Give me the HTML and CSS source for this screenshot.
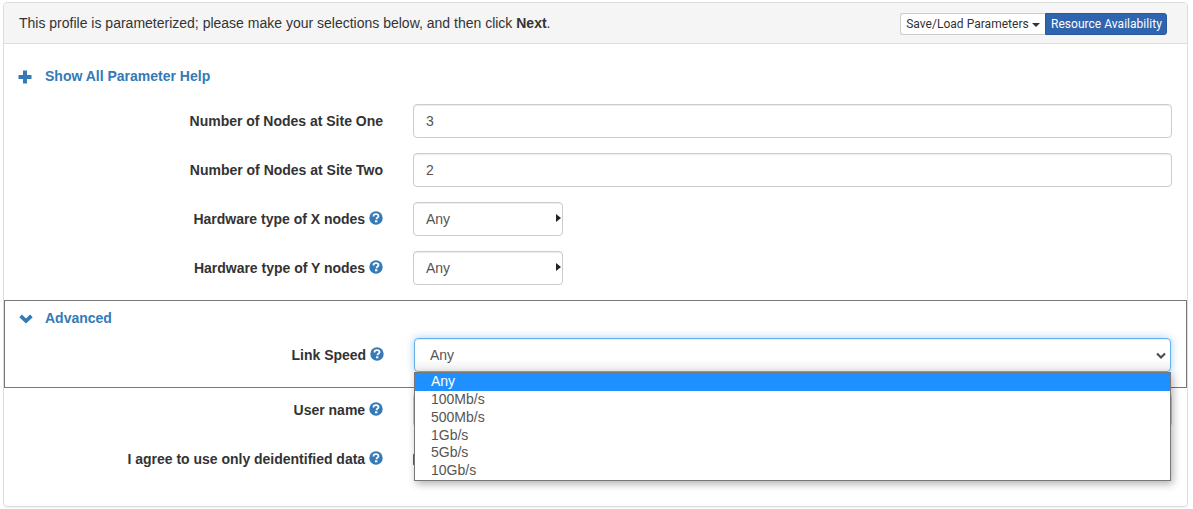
FILE: index.html
```html
<!DOCTYPE html>
<html lang="en">
<head>
<meta charset="utf-8">
<title>Parameterize</title>
<link rel="stylesheet" href="styles.css">
</head>
<body>
<svg width="0" height="0" class="defs">
  <symbol id="help" viewBox="0 0 14 14">
    <circle cx="7" cy="7" r="6.7" fill="#337ab7"/>
    <path d="M4.500 5.400C4.500 3.700 5.600 3.100 7 3.100S9.500 3.900 9.500 5.200C9.500 6.600 7.500 6.600 7.500 8.200" fill="none" stroke="#fff" stroke-width="1.9"/>
    <path d="M6 9.300h2.400v2H6z" fill="#fff"/>
  </symbol>
</svg>
<main class="panel">
  <header class="heading">
    <p class="intro">This profile is parameterized; please make your selections below, and then click <b>Next</b>.</p>
    <div class="buttons">
      <button class="btn btn-default">Save/Load Parameters <span class="caret"></span></button>
      <button class="btn btn-primary">Resource Availability</button>
    </div>
  </header>
  <section class="body">
    <a class="toggle help-toggle"><svg class="toggle-icon" viewBox="0 0 14 14"><path d="M5 .5h4V5h4.500v4H9v4.500H5V9H.5V5H5z" fill="currentColor"/></svg><span>Show All Parameter Help</span></a>
    <div class="row"><label>Number of Nodes at Site One</label><div class="control">3</div></div>
    <div class="row"><label>Number of Nodes at Site Two</label><div class="control">2</div></div>
    <div class="row"><label>Hardware type of X nodes <svg class="help"><use href="#help"/></svg></label><div class="control short">Any<span class="arrow"></span></div></div>
    <div class="row"><label>Hardware type of Y nodes <svg class="help"><use href="#help"/></svg></label><div class="control short">Any<span class="arrow"></span></div></div>
    <div class="advanced">
      <a class="toggle"><svg class="toggle-icon" viewBox="0 0 14 14"><path d="M.3 5.200 2.900 2.600 7 6.400l4.100-3.800 2.600 2.600L7 11.500z" fill="currentColor"/></svg><span>Advanced</span></a>
      <div class="row link-row"><label>Link Speed <svg class="help"><use href="#help"/></svg></label>
        <div class="control focused">Any<svg class="chevron" viewBox="0 0 10 8"><path d="m1 1.500 4 4 4-4" fill="none" stroke="#4d4d4d" stroke-width="2.200"/></svg>
          <ul class="menu"><li class="selected">Any</li><li>100Mb/s</li><li>500Mb/s</li><li>1Gb/s</li><li>5Gb/s</li><li>10Gb/s</li></ul>
        </div>
      </div>
    </div>
    <div class="row"><label>User name <svg class="help"><use href="#help"/></svg></label><div class="control"></div></div>
    <div class="row"><label>I agree to use only deidentified data <svg class="help"><use href="#help"/></svg></label><span class="check"></span></div>
  </section>
</main>
</body>
</html>
```
FILE: styles.css
```css
* { box-sizing: border-box; }
body { margin: 0; padding: 2px 5px 2px 3px; font: 14px/20px "Liberation Sans", Arial, sans-serif; color: #333; background: #fff; }
.defs { position: absolute; }
.panel { height: 505px; border: 1px solid #ddd; border-radius: 4px; box-shadow: 0 1px 1px rgba(0,0,0,.05); }
.heading { height: 41px; display: flex; justify-content: space-between; background: #f5f5f5; border-bottom: 1px solid #ddd; border-radius: 3px 3px 0 0; padding: 10px 20px 0 15px; }
.intro { margin: 0; }
.buttons { display: flex; height: 22px; }
.btn { height: 22px; margin: 0; padding: 0 5px; border: 1px solid #ccc; font: 12px/18px Roboto, Arial, sans-serif; white-space: nowrap; color: #333; background: #fff; }
.btn-default { width: 145px; padding: 0 4px; letter-spacing: .03px; border-right: 0; border-radius: 3px 0 0 3px; }
.btn-primary { width: 122px; letter-spacing: .03px; color: #fff; background: #2f64ae; border-color: #28589d; border-radius: 0 3px 3px 0; }
.caret { display: inline-block; vertical-align: middle; border: 4px solid transparent; border-top-color: #333; border-bottom: 0; }
.body { padding-top: 22px; }
.toggle { display: flex; align-items: center; gap: 12px; height: 20px; margin-left: 14px; color: #337ab7; font-weight: bold; }
.toggle-icon { width: 14px; height: 14px; margin-top: 2px; }
.help-toggle { gap: 13px; margin-bottom: 18px; }
.row { display: flex; height: 34px; margin-bottom: 15px; padding-right: 15px; }
.row label { width: 379px; margin-right: 30px; padding-top: 7px; text-align: right; font-weight: bold; letter-spacing: -.01px; white-space: nowrap; }
.help { width: 14px; height: 14px; vertical-align: -1px; }
.control { position: relative; flex: 1; height: 34px; padding: 6px 12px; border: 1px solid #ccc; border-radius: 4px; color: #555; background: #fff; box-shadow: inset 0 1px 1px rgba(0,0,0,.075); }
.short { flex: 0 0 150px; }
.arrow { position: absolute; right: 1px; top: 11px; border: 4px solid transparent; border-left: 5px solid #222; border-right: 0; }
.advanced { height: 88px; border: 1px solid #777; padding-top: 7px; margin-bottom: 5px; }
.link-row { margin: 10px 0 0; padding-right: 15px; }
.focused { padding-left: 15px; border-color: #66afe9; background: linear-gradient(#fff 65%, #ededed); box-shadow: inset 0 1px 1px rgba(0,0,0,.075), 0 0 8px rgba(102,175,233,.6); }
.chevron { position: absolute; right: 4px; top: 13px; width: 10px; height: 8px; }
.menu { position: absolute; z-index: 2; left: -1px; right: -1px; top: 33px; height: 109px; margin: 0; padding: 0; list-style: none; border: 1px solid #777; background: #fff; box-shadow: 2px 3px 8px rgba(0,0,0,.3); color: #555; }
.menu li { height: 17.8px; line-height: 17px; padding-left: 16px; }
.menu .selected { height: 18px; background: #1e90ff; color: #fff; }
.check { width: 13px; height: 13px; margin-top: 11px; border: 1px solid #0075ff; border-radius: 2px; background: #0075ff; }
```
